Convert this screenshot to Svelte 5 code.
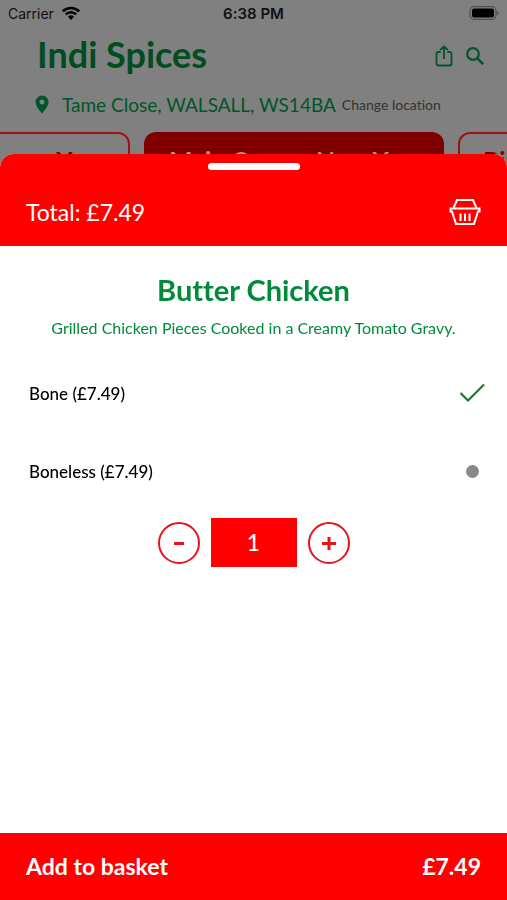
<!-- src/App.svelte -->
<script lang="ts">
  const tabs = [
    { name: 'Starters new Year', active: false },
    { name: 'Main Course New Year', active: true },
    { name: 'Biryani New Year', active: false },
  ];

  const options = [
    { id: 'bone', name: 'Bone', price: 7.49 },
    { id: 'boneless', name: 'Boneless', price: 7.49 },
  ];

  let selected = $state('bone');
  let quantity = $state(1);

  let unitPrice = $derived(options.find((o) => o.id === selected)?.price ?? 0);
  let total = $derived((unitPrice * quantity).toFixed(2));

  function decrease() {
    if (quantity > 1) quantity -= 1;
  }

  function increase() {
    quantity += 1;
  }
</script>

<div class="screen">
  <div class="status-bar">
    <div class="carrier">
      <span>Carrier</span>
      <svg width="18" height="14" viewBox="0 0 18 14" fill="none" stroke="#000" stroke-width="2.6">
        <path d="M0.9 5.3a11.6 11.6 0 0 1 16.2 0" />
        <path d="M3.8 8.4a7.4 7.4 0 0 1 10.4 0" />
        <path d="M9 14l-3-3.2a4.3 4.3 0 0 1 6 0z" fill="#000" stroke="none" />
      </svg>
    </div>
    <span class="time">6:38 PM</span>
    <div class="battery">
      <svg width="31" height="14" viewBox="0 0 31 14">
        <rect x="2" y="0.7" width="26" height="12.6" rx="4" fill="none" stroke="#505050" stroke-width="1.2" />
        <rect x="4" y="2.6" width="22" height="8.8" rx="2" fill="#000" />
        <path d="M29.4 4.8c1.8 0.7 1.8 3.7 0 4.4z" fill="#505050" />
      </svg>
    </div>
  </div>

  <header class="shop">
    <h1>Indi Spices</h1>
    <div class="shop-actions">
      <button class="icon-btn" aria-label="Share">
        <svg width="18" height="22" viewBox="0 0 18 22" fill="none" stroke="#00552a" stroke-width="1.8" stroke-linejoin="round">
          <path d="M5.6 7H3.2a1.7 1.7 0 0 0-1.7 1.7v10.1a1.7 1.7 0 0 0 1.7 1.7h11.6a1.7 1.7 0 0 0 1.7-1.7V8.7a1.7 1.7 0 0 0-1.7-1.7h-2.4" />
          <path d="M9 14V1.5M5.2 5L9 1.3 12.8 5" />
        </svg>
      </button>
      <button class="icon-btn" aria-label="Search">
        <svg width="18" height="18" viewBox="0 0 18 18" fill="none" stroke="#00552a" stroke-width="2.2">
          <circle cx="7" cy="7" r="5.8" />
          <path d="M11.2 11.2l6 6" stroke-width="2.6" />
        </svg>
      </button>
    </div>
  </header>

  <div class="location">
    <svg width="14" height="19" viewBox="0 0 14 19">
      <path
        d="M7 0.5a6.5 6.5 0 0 0-6.5 6.5c0 4.7 6.5 11.5 6.5 11.5s6.5-6.8 6.5-11.5a6.5 6.5 0 0 0-6.5-6.5zm0 4a2.5 2.5 0 1 1 0 5 2.5 2.5 0 0 1 0-5z"
        fill="#00552a"
        fill-rule="evenodd"
      />
    </svg>
    <span class="address">Tame Close, WALSALL, WS14BA</span>
    <a href="#location">Change location</a>
  </div>

  <nav class="tabs">
    {#each tabs as tab}
      <button class="tab" class:active={tab.active}>{tab.name}</button>
    {/each}
  </nav>

  <section class="sheet">
    <div class="sheet-top">
      <div class="handle"></div>
      <div class="sheet-total">
        <span>Total: £{total}</span>
        <svg width="32" height="28" viewBox="0 0 32 28" fill="none" stroke="#fff" stroke-width="2">
          <path d="M4.5 10L8 2h16l3.5 8" />
          <path d="M1.5 10.500h29v3h-1.500L25 26H7L3 13.500H1.500z" />
          <path d="M11.500 15.500v7.500M16 15.500v7.500M20.500 15.500v7.500" />
        </svg>
      </div>
    </div>

    <div class="sheet-body">
      <h2>Butter Chicken</h2>
      <p>Grilled Chicken Pieces Cooked in a Creamy Tomato Gravy.</p>

      <div class="options">
        {#each options as option}
          <label class="option">
            <span>{option.name} (£{option.price})</span>
            <span class="mark">
              <input type="radio" name="option" value={option.id} bind:group={selected} />
            </span>
          </label>
        {/each}
      </div>

      <div class="quantity">
        <button class="round" aria-label="Decrease quantity" onclick={decrease}>
          <svg width="16" height="16" viewBox="0 0 16 16"><path d="M3 8.500h10" stroke="#e8141c" stroke-width="3" /></svg>
        </button>
        <output>{quantity}</output>
        <button class="round" aria-label="Increase quantity" onclick={increase}>
          <svg width="16" height="16" viewBox="0 0 16 16"><path d="M1 8.500h14M8 2v13" stroke="#e8141c" stroke-width="3" /></svg>
        </button>
      </div>
    </div>

    <button class="add">
      <span>Add to basket</span>
      <span>£{total}</span>
    </button>
  </section>
</div>

<style>
  :global(body) {
    margin: 0;
    background: #808080;
  }

  .screen {
    min-height: 100vh;
    overflow: hidden;
    font-family: Lato, 'Open Sans', sans-serif;
    font-variant-ligatures: none;
  }

  button {
    font-family: inherit;
    cursor: pointer;
  }

  svg {
    display: block;
  }

  .status-bar {
    box-sizing: border-box;
    display: grid;
    grid-template-columns: 1fr auto 1fr;
    align-items: center;
    height: 28px;
    padding: 0 8px 2px;
    font-family: Inter, 'Liberation Sans', sans-serif;
    font-size: 14px;
    color: #111;
  }

  .carrier {
    display: flex;
    align-items: center;
    gap: 8px;
  }

  .time {
    font-size: 15px;
    font-weight: 600;
  }

  .battery {
    display: flex;
    justify-content: flex-end;
  }

  .shop {
    display: flex;
    align-items: center;
    justify-content: space-between;
    height: 56px;
    padding: 0 23px 0 37px;
  }

  h1 {
    margin: 0;
    padding-bottom: 4px;
    font-size: 36px;
    font-weight: 700;
    color: #004d21;
  }

  .shop-actions {
    display: flex;
    align-items: center;
    gap: 13px;
  }

  .icon-btn {
    padding: 0;
    border: none;
    background: none;
  }

  .location {
    display: flex;
    align-items: center;
    height: 40px;
    padding-left: 35px;
    white-space: nowrap;
  }

  .address {
    margin: 0 6px 0 13px;
    font-size: 19px;
    color: #00552a;
  }

  .location a {
    font-size: 14px;
    color: #333;
    text-decoration: none;
  }

  .tabs {
    display: flex;
    justify-content: center;
    gap: 14px;
    padding: 8px 0 0 81px;
  }

  .tab {
    flex: none;
    width: 300px;
    height: 56px;
    padding: 0 23px;
    border: 2px solid #a01018;
    border-radius: 12px;
    background: none;
    font-size: 25px;
    font-weight: 700;
    white-space: nowrap;
    color: #800000;
  }

  .tab:first-child {
    text-align: right;
  }

  .tab:last-child {
    text-align: left;
  }

  .tab.active {
    border-color: #800000;
    background: #800000;
    color: #999;
  }

  .sheet {
    position: fixed;
    inset: 154px 0 0;
    display: flex;
    flex-direction: column;
    border-radius: 14px 14px 0 0;
    overflow: hidden;
    background: #fff;
  }

  .sheet-top {
    padding: 9px 26px 5px;
    background: #f00;
    color: #fff;
  }

  .handle {
    width: 92px;
    height: 7px;
    margin: 0 auto 13px;
    border-radius: 4px;
    background: #fff;
  }

  .sheet-total {
    display: flex;
    align-items: center;
    justify-content: space-between;
    height: 58px;
    font-size: 23px;
  }

  .sheet-body {
    flex: 1;
    padding: 26px 22px 0;
  }

  h2 {
    margin: 0;
    font-size: 29px;
    line-height: 36px;
    font-weight: 700;
    text-align: center;
    color: #008a3c;
  }

  p {
    margin: 8px 0 0;
    font-size: 16px;
    line-height: 24px;
    text-align: center;
    color: #008a3c;
  }

  .options {
    padding: 14px 0 0 7px;
  }

  .option {
    display: flex;
    align-items: center;
    justify-content: space-between;
    height: 78px;
    font-size: 17px;
    font-weight: 500;
    color: #000;
  }

  .mark {
    display: flex;
    justify-content: center;
    width: 25px;
  }

  .mark input {
    appearance: none;
    width: 13px;
    height: 13px;
    margin: 0;
    border-radius: 50%;
    background: #888;
  }

  .mark input:checked {
    width: 25px;
    height: 18px;
    border-radius: 0;
    background: #127a1e;
    clip-path: polygon(1px 8px, 8px 15px, 23px 0, 25px 1px, 8px 18px, 0 10px);
  }

  .quantity {
    display: flex;
    align-items: center;
    justify-content: center;
    gap: 11px;
    padding-top: 8px;
  }

  .round {
    display: grid;
    place-items: center;
    width: 42px;
    height: 42px;
    padding: 0;
    border: 2px solid #e8141c;
    border-radius: 50%;
    background: none;
  }

  output {
    width: 86px;
    font-size: 23px;
    font-weight: 500;
    line-height: 49px;
    text-align: center;
    background: #f00;
    color: #fff;
  }

  .add {
    display: flex;
    align-items: center;
    justify-content: space-between;
    height: 67px;
    padding: 0 26px 2px;
    border: none;
    background: #f00;
    font-size: 23px;
    font-weight: 700;
    color: #fff;
  }
</style>
